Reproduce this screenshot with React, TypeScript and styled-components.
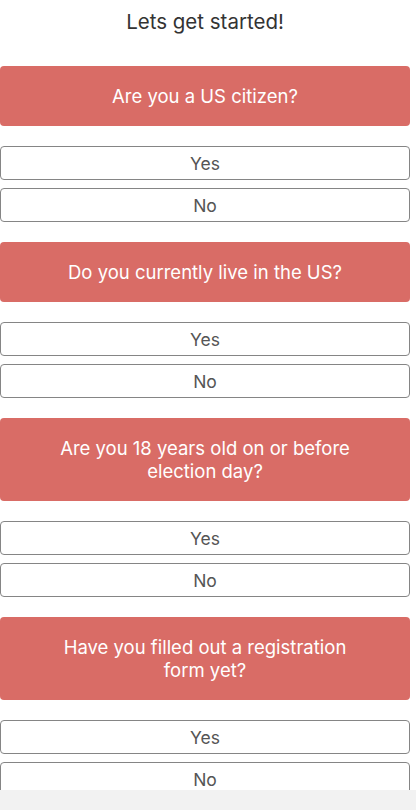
import React from "react";
import styled, { createGlobalStyle } from "styled-components";

const GlobalStyle = createGlobalStyle`
  html, body {
    margin: 0;
    padding: 0;
    background: #ffffff;
  }
  body {
    font-family: Inter, Roboto, "Liberation Sans", sans-serif;
  }
`;

const Screen = styled.div`
  width: 416px;
  height: 810px;
  display: flex;
  flex-direction: column;
  overflow: hidden;
`;

const ScrollArea = styled.div`
  width: 410px;
  height: 790px;
  overflow: hidden;
  display: flex;
  flex-direction: column;
`;

const Footer = styled.div`
  height: 20px;
  background: #f2f2f2;
  flex-shrink: 0;
`;

const Title = styled.h1`
  margin: 0 0 22px;
  height: 44px;
  line-height: 44px;
  text-align: center;
  font-size: 20.5px;
  font-weight: 400;
  color: #333333;
  flex-shrink: 0;
`;

const Question = styled.div`
  width: 410px;
  box-sizing: border-box;
  padding: 18.5px 50px;
  background: #d96c66;
  color: #ffffff;
  border-radius: 4px;
  text-align: center;
  font-size: 18.5px;
  line-height: 23px;
  margin-bottom: 20px;
  flex-shrink: 0;
`;

const Answer = styled.button<{ $last?: boolean }>`
  width: 410px;
  height: 34px;
  flex-shrink: 0;
  box-sizing: border-box;
  border: 1px solid #858585;
  border-radius: 4px;
  background: #ffffff;
  color: #555555;
  font-family: Inter, Roboto, "Liberation Sans", sans-serif;
  font-size: 17.5px;
  padding: 0;
  margin: 0 0 ${(p) => (p.$last ? "20px" : "8px")};
  text-align: center;
`;

const questions = [
  "Are you a US citizen?",
  "Do you currently live in the US?",
  "Are you 18 years old on or before election day?",
  "Have you filled out a registration form yet?",
];

export default function App() {
  return (
    <>
      <GlobalStyle />
      <Screen>
        <ScrollArea>
          <Title>Lets get started!</Title>
          {questions.map((q) => (
            <React.Fragment key={q}>
              <Question>{q}</Question>
              <Answer>Yes</Answer>
              <Answer $last>No</Answer>
            </React.Fragment>
          ))}
        </ScrollArea>
        <Footer />
      </Screen>
    </>
  );
}
